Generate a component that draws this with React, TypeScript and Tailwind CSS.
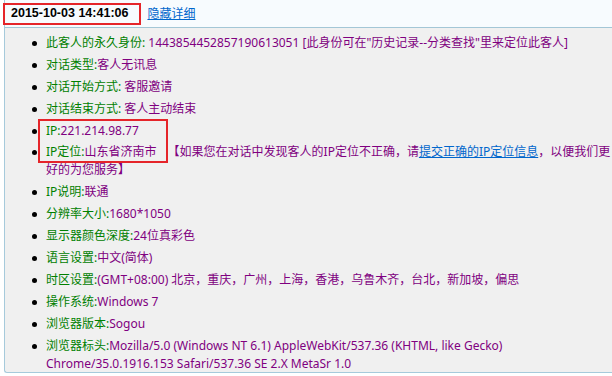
const rows: { label: string; value: React.ReactNode }[] = [
  { label: "此客人的永久身份:", value: ' 1443854452857190613051 [此身份可在"历史记录--分类查找"里来定位此客人]' },
  { label: "对话类型:", value: "客人无讯息" },
  { label: "对话开始方式:", value: " 客服邀请" },
  { label: "对话结束方式:", value: " 客人主动结束" },
  { label: "IP:", value: "221.214.98.77" },
  {
    label: "IP定位:",
    value: (
      <>
        山东省济南市<span className="inline-block w-[11px]" />【如果您在对话中发现客人的IP定位不正确，请
        <a href="#" className="text-[#0066cc] underline">提交正确的IP定位信息</a>
        ，以便我们更<br />好的为您服务】
      </>
    ),
  },
  { label: "IP说明:", value: "联通" },
  { label: "分辨率大小:", value: "1680*1050" },
  { label: "显示器颜色深度:", value: "24位真彩色" },
  { label: "语言设置:", value: "中文(简体)" },
  { label: "时区设置:", value: "(GMT+08:00) 北京，重庆，广州，上海，香港，乌鲁木齐，台北，新加坡，偏思" },
  { label: "操作系统:", value: "Windows 7" },
  { label: "浏览器版本:", value: "Sogou" },
  {
    label: "浏览器标头:",
    value: (
      <>
        Mozilla/5.0 (Windows NT 6.1) AppleWebKit/537.36 (KHTML, like Gecko)<br />Chrome/35.0.1916.153 Safari/537.36 SE 2.X MetaSr 1.0
      </>
    ),
  },
];

export default function App() {
  return (
    <div className="relative w-[612px] h-[376px] overflow-hidden bg-white text-[12px] font-['Noto_Sans','Noto_Sans_CJK_SC',sans-serif]">
      <div className="ml-[4px] h-[373px] border-l border-b border-[#a6cadb] rounded-bl-[3px] bg-[#f0f0f0]">
        {/* header bar */}
        <div className="h-[28px] bg-[#f7fbfe] border-b border-[#a3c6d6] flex items-center">
          <span className="ml-[6px] font-bold text-[12.5px] text-black font-['Liberation_Sans',sans-serif]">
            2015-10-03 14:41:06
          </span>
          <a href="#" className="ml-[19px] text-[#0066cc] underline leading-none">隐藏详细</a>
        </div>

        <ul className="pt-[6px] flex flex-col gap-[3.9px]">
          {rows.map((r, i) => (
            <li key={i} className="flex leading-[18px]">
              <span className="w-[41px] shrink-0 flex justify-start pl-[27px] pt-[7px]">
                <span className="block w-[5px] h-[5px] rounded-full bg-black" />
              </span>
              <span className="text-[#800080] whitespace-pre">
                <span className="text-[#008000]">{r.label}</span>
                {r.value}
              </span>
            </li>
          ))}
        </ul>
      </div>

      {/* red annotation boxes */}
      <div className="absolute left-[3px] top-[3px] w-[138px] h-[22px] border-2 border-[#e5252a]" />
      <div className="absolute left-[38px] top-[119px] w-[130px] h-[44px] border-2 border-[#e5252a]" />
    </div>
  );
}
